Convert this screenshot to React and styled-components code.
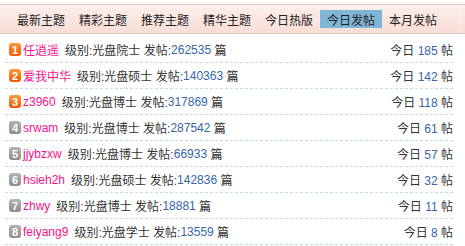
import React from 'react';
import styled, { createGlobalStyle } from 'styled-components';

const GlobalStyle = createGlobalStyle`
    html, body {
        margin: 0;
        padding: 0;
        background: #fff;
    }
    body {
        font-family: 'Liberation Sans', Arial, 'Noto Sans CJK SC', sans-serif;
        font-size: 12px;
        color: #333;
    }
`;

const Wrap = styled.div`
    width: 465px;
    padding-top: 4px;
`;

const TabBar = styled.div`
    display: flex;
    height: 28px;
    border-top: 1px solid #e6c6c2;
    border-bottom: 1px solid #e6c6c2;
    background: linear-gradient(#fcefeb, #f8ddd6);
`;

const TabList = styled.ul`
    display: flex;
    align-items: center;
    width: 449px;
    margin: 0;
    padding: 0 0 0 10px;
    list-style: none;
    border-right: 1px solid #fdf3f1;
`;

const Tab = styled.li`
    display: flex;
    align-items: center;
    height: 18px;
    padding: 0 7px;
    font-size: 12px;
    color: #222;
    background: ${(props) => (props.active ? '#7fb5d6' : 'transparent')};
`;

const List = styled.ul`
    margin: 3px 12px 0 5px;
    padding: 0;
    list-style: none;
`;

const Row = styled.li`
    display: flex;
    align-items: center;
    justify-content: space-between;
    height: 25px;
    padding-left: 4px;
    border-bottom: 1px dashed #c4dbe6;
`;

const Info = styled.div`
    display: flex;
    align-items: center;
    white-space: pre;
`;

const Badge = styled.span`
    display: inline-flex;
    align-items: center;
    justify-content: center;
    width: 12px;
    height: 13px;
    margin-right: 2px;
    border-radius: 3px;
    font-size: 11px;
    font-weight: bold;
    color: #fff;
    background: ${(props) =>
        props.top ? 'linear-gradient(#ff9a3c, #f05800)' : 'linear-gradient(#b4b4b4, #8c8c8c)'};
`;

const Name = styled.span`
    color: #f0148c;
    margin-right: 6px;
`;

const Num = styled.span`
    color: #3567a8;
`;

const Today = styled.span`
    white-space: pre;
`;

const tabs = ['最新主题', '精彩主题', '推荐主题', '精华主题', '今日热版', '今日发帖', '本月发帖'];

const users = [
    { name: '任逍遥', level: '光盘院士', posts: 262535, today: 185 },
    { name: '爱我中华', level: '光盘硕士', posts: 140363, today: 142 },
    { name: 'z3960', level: '光盘博士', posts: 317869, today: 118 },
    { name: 'srwam', level: '光盘博士', posts: 287542, today: 61 },
    { name: 'jjybzxw', level: '光盘博士', posts: 66933, today: 57 },
    { name: 'hsieh2h', level: '光盘硕士', posts: 142836, today: 32 },
    { name: 'zhwy', level: '光盘博士', posts: 18881, today: 11 },
    { name: 'feiyang9', level: '光盘学士', posts: 13559, today: 8 },
];

function App() {
    return (
        <Wrap>
            <GlobalStyle />
            <TabBar>
                <TabList>
                    {tabs.map((t) => (
                        <Tab key={t} active={t === '今日发帖'}>
                            {t}
                        </Tab>
                    ))}
                </TabList>
            </TabBar>
            <List>
                {users.map((u, i) => (
                    <Row key={u.name}>
                        <Info>
                            <Badge top={i < 3}>{i + 1}</Badge>
                            <Name>{u.name}</Name>
                            <span>级别:{u.level} 发帖:</span>
                            <Num>{u.posts}</Num>
                            <span> 篇</span>
                        </Info>
                        <Today>
                            今日 <Num>{u.today}</Num> 帖
                        </Today>
                    </Row>
                ))}
            </List>
        </Wrap>
    );
}

export default App;
